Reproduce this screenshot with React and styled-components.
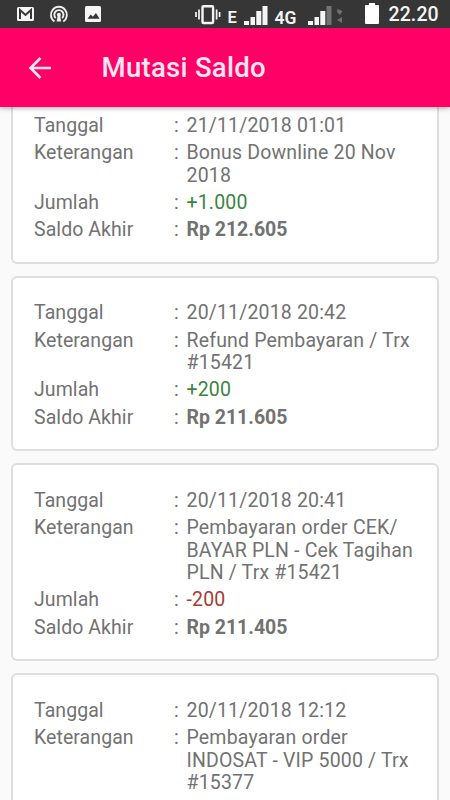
import React from "react";
import styled, { createGlobalStyle } from "styled-components";

const GlobalStyle = createGlobalStyle`
  * {
    box-sizing: border-box;
  }

  body {
    margin: 0;
    font-family: Roboto, sans-serif;
    background-color: #fafafa;
  }
`;

const Screen = styled.div`
  display: flex;
  flex-direction: column;
  width: 450px;
  height: 800px;
  overflow: hidden;
  background-color: #fafafa;
`;

const StatusBar = styled.div`
  display: flex;
  flex: none;
  justify-content: space-between;
  height: 28px;
  padding: 0 12px 0 16px;
  color: #f5f5f5;
  background-color: #363636;
  z-index: 2;
`;

const StatusIcons = styled.svg`
  flex: none;
  width: ${(props) => props.width}px;
  height: 28px;
`;

const StatusRight = styled.div`
  display: flex;
`;

const Network = styled.span`
  width: ${(props) => props.$width}px;
  padding-top: 8px;
  font-size: ${(props) => props.$size}px;
  font-weight: 600;
  line-height: 20px;
`;

const Clock = styled.span`
  width: 49.5px;
  font-size: 19.5px;
  font-weight: 500;
  line-height: 30px;
  letter-spacing: 0.1px;
  white-space: nowrap;
`;

const Header = styled.header`
  display: flex;
  flex: none;
  align-items: center;
  height: 79px;
  padding-left: 27px;
  color: #ffe6f1;
  background-color: #ff0066;
  box-shadow: 0 1px 5px rgba(0, 0, 0, 0.35);
  z-index: 1;
`;

const BackButton = styled.button`
  display: flex;
  width: 74.5px;
  padding: 0;
  border: none;
  color: inherit;
  background: none;
  cursor: pointer;
`;

const Title = styled.h1`
  margin: 0;
  font-size: 27.6px;
  font-weight: 500;
  letter-spacing: 0.25px;
`;

const List = styled.main`
  display: flex;
  flex-direction: column;
  gap: 12px;
  margin-top: -18.9px;
  padding: 0 11px;
`;

const Card = styled.section`
  display: flex;
  flex: none;
  flex-direction: column;
  gap: 4.9px;
  padding: 24.9px 20px 19.9px 21px;
  border: 2px solid #dedede;
  border-radius: 6px;
  background-color: #fff;
`;

const Row = styled.div`
  display: grid;
  grid-template-columns: 140px 12.5px 1fr;
  color: #727272;
  font-size: 19.5px;
  line-height: 22.4px;
  letter-spacing: 0.07px;
`;

const Value = styled.span`
  color: ${(props) => props.$color || "inherit"};
  font-weight: ${(props) => (props.$bold ? 700 : 400)};
  letter-spacing: ${(props) => (props.$bold ? "-0.02px" : "0.17px")};
  white-space: pre-line;
`;

const mutations = [
  {
    date: "21/11/2018 01:01",
    note: "Bonus Downline 20 Nov\n2018",
    amount: "+1.000",
    balance: "Rp 212.605",
  },
  {
    date: "20/11/2018 20:42",
    note: "Refund Pembayaran / Trx\n#15421",
    amount: "+200",
    balance: "Rp 211.605",
  },
  {
    date: "20/11/2018 20:41",
    note: "Pembayaran order CEK/\nBAYAR PLN - Cek Tagihan\nPLN / Trx #15421",
    amount: "-200",
    balance: "Rp 211.405",
  },
  {
    date: "20/11/2018 12:12",
    note: "Pembayaran order\nINDOSAT - VIP 5000 / Trx\n#15377",
  },
];

const Field = ({ label, children, color, bold }) => (
  <Row>
    <span>{label}</span>
    <span>:</span>
    <Value $color={color} $bold={bold}>
      {children}
    </Value>
  </Row>
);

const Notifications = () => (
  <StatusIcons width={90} viewBox="0 0 90 28" fill="none">
    <rect x="1" y="7" width="17" height="14" rx="1.5" fill="#f5f5f5" />
    <path d="M4 19V10l5.5 5 5.5-5v9" stroke="#363636" strokeWidth="2" />
    <g stroke="#eeeeee" strokeWidth="1.9">
      <path d="M38.5 21.5a8 8 0 1 1 8.8 0" />
      <path d="M39.7 18a4.6 4.6 0 1 1 6.4 0" />
    </g>
    <circle cx="42.9" cy="14.7" r="2" fill="#eeeeee" />
    <path d="M41.6 16h2.6l1 5.5h-4.6z" fill="#eeeeee" />
    <rect x="69" y="6" width="16" height="16" rx="1.5" fill="#f5f5f5" />
    <path d="M71.5 18.7l3.2-4.2 2.2 2.3 3-3.8 3.7 5.7z" fill="#363636" />
  </StatusIcons>
);

const Vibrate = () => (
  <StatusIcons width={33} viewBox="0 0 33 28" fill="none" stroke="#f5f5f5">
    <rect x="7.5" y="6.2" width="10.6" height="16.8" rx="1" strokeWidth="2.4" />
    <path d="M4 9.5v10M21.6 9.5v10M1 12v5M24.6 12v5" strokeWidth="1.7" />
  </StatusIcons>
);

const Signal = ({ width, weak }) => (
  <StatusIcons width={width} viewBox={`0 0 ${width} 28`} fill="#f5f5f5">
    <path d="M0 21h5v4H0zM6.5 17h4.5v8H6.5zM12.3 11h5v14h-5z" />
    <path d="M18.5 6h5v19h-5z" fill={weak ? "#737373" : "#f5f5f5"} />
    {weak && (
      <path d="M29.5 9l5 2-2.5 4-3-3zM34 17v6l-5-3z" fill="#707070" />
    )}
  </StatusIcons>
);

const Battery = () => (
  <StatusIcons width={24} viewBox="0 0 24 28" fill="#ffffff">
    <path d="M4 3h6v2h3q1 0 1 1v17q0 1-1 1H1q-1 0-1-1V6q0-1 1-1h3z" />
  </StatusIcons>
);

const BackArrow = () => (
  <svg width="26" height="26" viewBox="0 0 26 26" fill="none">
    <path
      d="M24 13H4M13.5 3L3.5 13l10 10"
      stroke="currentColor"
      strokeWidth="2.6"
    />
  </svg>
);

const App = () => {
  return (
    <>
      <GlobalStyle />
      <Screen>
        <StatusBar>
          <Notifications />
          <StatusRight>
            <Vibrate />
            <Network $width={16} $size={16.5}>
              E
            </Network>
            <Signal width={31} />
            <Network $width={33} $size={17.5}>
              4G
            </Network>
            <Signal width={57} weak />
            <Battery />
            <Clock>22.20</Clock>
          </StatusRight>
        </StatusBar>
        <Header>
          <BackButton aria-label="Kembali">
            <BackArrow />
          </BackButton>
          <Title>Mutasi Saldo</Title>
        </Header>
        <List>
          {mutations.map((item) => (
            <Card key={item.date}>
              <Field label="Tanggal">{item.date}</Field>
              <Field label="Keterangan">{item.note}</Field>
              {item.amount && (
                <Field
                  label="Jumlah"
                  color={item.amount.startsWith("-") ? "#a93a36" : "#3a8540"}
                >
                  {item.amount}
                </Field>
              )}
              {item.balance && (
                <Field label="Saldo Akhir" bold>
                  {item.balance}
                </Field>
              )}
            </Card>
          ))}
        </List>
      </Screen>
    </>
  );
};

export default App;
